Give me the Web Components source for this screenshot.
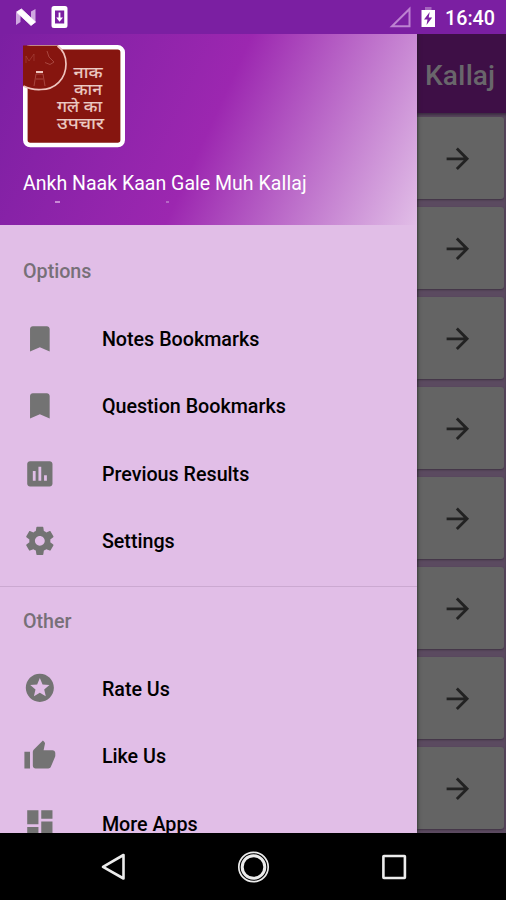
<!DOCTYPE html>
<html lang="en">
<head>
<meta charset="utf-8">
<title>Ankh Naak Kaan Gale Muh KaIlaj</title>
<style>
html,body{margin:0;height:900px;overflow:hidden;background:#000;font-family:Roboto,"Noto Sans",sans-serif}
</style>
</head>
<body>
<app-screen></app-screen>
<script>
function define(name, html, setup) {
  customElements.define(name, class extends HTMLElement {
    connectedCallback() {
      if (this.shadowRoot) return;
      const t = document.createElement('template');
      t.innerHTML = html;
      this.attachShadow({mode: 'open'}).appendChild(t.content.cloneNode(true));
      if (setup) setup(this, this.shadowRoot);
    }
  });
}

const ICONS = {
  bookmark: 'M17 3H7c-1.1 0-1.99.9-1.99 2L5 21l7-3 7 3V5c0-1.1-.9-2-2-2z',
  chart: 'M19 3H5c-1.1 0-2 .9-2 2v14c0 1.1.9 2 2 2h14c1.1 0 2-.9 2-2V5c0-1.1-.9-2-2-2zM9 17H7v-7h2v7zm4 0h-2V7h2v10zm4 0h-2v-4h2v4z',
  gear: 'M19.43 12.98c.04-.32.07-.64.07-.98s-.03-.66-.07-.98l2.11-1.65c.19-.15.24-.42.12-.64l-2-3.46c-.12-.22-.39-.3-.61-.22l-2.49 1c-.52-.4-1.08-.73-1.69-.98l-.38-2.65C14.46 2.18 14.25 2 14 2h-4c-.25 0-.46.18-.49.42l-.38 2.65c-.61.25-1.17.59-1.69.98l-2.49-1c-.23-.09-.49 0-.61.22l-2 3.46c-.13.22-.07.49.12.64l2.11 1.65c-.04.32-.07.65-.07.98s.03.66.07.98l-2.11 1.65c-.19.15-.24.42-.12.64l2 3.46c.12.22.39.3.61.22l2.49-1c.52.4 1.08.73 1.69.98l.38 2.65c.03.24.24.42.49.42h4c.25 0 .46-.18.49-.42l.38-2.65c.61-.25 1.17-.59 1.69-.98l2.49 1c.23.09.49 0 .61-.22l2-3.46c.12-.22.07-.49-.12-.64l-2.11-1.65zM12 15.5c-1.93 0-3.5-1.57-3.5-3.5s1.57-3.5 3.5-3.5 3.5 1.57 3.5 3.5-1.57 3.5-3.5 3.5z',
  star: 'M11.99 2C6.47 2 2 6.48 2 12s4.47 10 9.99 10C17.52 22 22 17.52 22 12S17.52 2 11.99 2zm4.24 16L12 15.45 7.77 18l1.12-4.81-3.73-3.23 4.92-.42L12 5l1.92 4.53 4.92.42-3.73 3.23L16.23 18z',
  thumb: 'M1 21h4V9H1v12zm22-11c0-1.1-.9-2-2-2h-6.31l.95-4.57.03-.32c0-.41-.17-.79-.44-1.06L14.17 1 7.59 7.59C7.22 7.95 7 8.45 7 9v10c0 1.1.9 2 2 2h9c.83 0 1.54-.5 1.84-1.22l3.02-7.05c.09-.23.14-.47.14-.73v-2z',
  dashboard: 'M3 13h8V3H3v10zm0 8h8v-6H3v6zm10 0h8V11h-8v10zm0-18v6h8V3h-8z',
  arrow: 'M12 4l-1.41 1.41L16.17 11H4v2h12.17l-5.58 5.59L12 20l8-8z'
};

define('md-icon', `<style>:host{display:block;width:33.7px;height:33.7px;flex:none}svg{display:block;width:100%;height:100%;fill:currentColor}</style>
<svg viewBox="0 0 24 24"><path/></svg>`, (el, root) => root.querySelector('path').setAttribute('d', ICONS[el.getAttribute('name')]));

define('status-bar', `<style>
:host{display:flex;height:34px;background:#7b1fa2;color:#fff;align-items:center;justify-content:space-between;box-sizing:border-box;padding:0 11px 0 15px}
div{display:flex;align-items:center}svg{display:block}
.time{font-size:19.7px;font-weight:500;line-height:34px;padding-top:3px;margin-left:8px}
</style>
<div><svg width="56" height="34" viewBox="15 0 56 34">
<path d="M16 13L20.500 9.500v12.500l-4.500 3zM31 11.500L35.500 9v13L31 25z" fill="#cfa8e0"/>
<path d="M16.500 12L21.500 9 35.500 22 31 25.500z" fill="#fff" stroke="#fff" stroke-width=".8" stroke-linejoin="round"/>
<path fill-rule="evenodd" fill="#fff" d="M54 6h11q2.500 0 2.500 2.500v17q0 2.500-2.500 2.500H54q-2.500 0-2.500-2.500v-17Q51.500 6 54 6zM55 10.500v13h9.200v-13z"/>
<path d="M59.500 12.500v6" fill="none" stroke="#fff" stroke-width="1.800"/><path d="M56.200 17.500h6.800l-3.400 4.300z" fill="#fff"/></svg></div>
<div><svg width="50" height="34" viewBox="388 0 50 34">
<path d="M393 26.200L410.500 9v17.200z" fill="none" stroke="#bd82d1" stroke-width="2"/>
<path d="M426 7h6.500v3H426z" fill="#a566be"/><path d="M422.500 10h13.500v17h-13.500z" fill="#fff"/><path d="M430.700 12l-5.700 7.500h3.500l-1 5.500 5.700-7.500h-3.500z" fill="#7b1fa2"/></svg>
<span class="time">16:40</span></div>`);

define('app-logo', `<style>:host{display:block;width:102px;height:103px}svg{display:block}text{font-family:"Noto Sans Devanagari","Noto Sans","Lohit Devanagari",sans-serif;font-size:16px;fill:#eccbc5;stroke:#eccbc5;stroke-width:.2px}</style>
<svg width="102" height="103" viewBox="23 45 102 103">
<rect x="25.300" y="47.300" width="97.400" height="97.700" rx="5" fill="#86150f" stroke="#fff" stroke-width="4.600"/>
<path d="M23 45.500H58A23 23 0 0 1 66.500 63C66.500 79 56 90 40 90Q30 89.500 23 86z" fill="#86150f"/>
<path d="M57.500 46C63 50 66 57 66 64C66 79 55 89.500 41 89.500Q31 90 23.500 86" fill="none" stroke="#efc4be" stroke-width="1.700"/>
<g fill="none" stroke="#a8463f" stroke-width="1"><path d="M26 63v-7l3 5 5-7v7" opacity=".6"/><path d="M47 51l2 6 5 5-4 2.500-5-2"/><path d="M34 86l2-12h7l2 12M36 79h7"/><path d="M36 72h7" stroke="#efc4be" stroke-width="2"/></g>
<text><tspan x="73.500" y="77.500" textLength="29" lengthAdjust="spacingAndGlyphs">नाक</tspan>
<tspan x="74" y="94.500" textLength="28" lengthAdjust="spacingAndGlyphs">कान</tspan>
<tspan x="57" y="111.500" textLength="45" lengthAdjust="spacingAndGlyphs">गले का</tspan>
<tspan x="57" y="128.500" textLength="47" lengthAdjust="spacingAndGlyphs">उपचार</tspan></text>
</svg>`);

define('drawer-header', `<style>
:host{display:flex;flex-direction:column;height:191px;box-sizing:border-box;padding:11px 23px 0;background:linear-gradient(114.6deg,#7b1fa2,#9c27b0 50%,#e1bee7);color:#fff;flex:none}
.name{font-size:19.550px;line-height:24px;margin-top:24px;white-space:nowrap}
.dots{display:flex;gap:106px;margin-left:32px;margin-top:5px}
i{display:block;width:5px;height:2px;background:#c98ad6}i+i{width:3px;background:#b668c6}
</style><app-logo></app-logo><div class="name"><slot></slot></div><div class="dots"><i></i><i></i></div>`);

define('menu-item', `<style>
:host{display:flex;height:67.450px;align-items:center;padding-left:23px;color:#000;font-size:19.700px;font-weight:500}
md-icon{color:#737373;margin-right:45.200px}span{white-space:nowrap;position:relative;top:1px}
</style><md-icon></md-icon><span><slot></slot></span>`, (el, root) => {
  const icon = root.querySelector('md-icon');
  const fresh = document.createElement('md-icon');
  fresh.setAttribute('name', el.getAttribute('icon'));
  icon.replaceWith(fresh);
});

define('menu-group', `<style>
:host{display:block}
.label{height:67.500px;line-height:70px;padding-left:23px;font-size:19.700px;font-weight:500;color:#777078}
</style><div class="label"></div><slot></slot>`, (el, root) => root.querySelector('.label').textContent = el.getAttribute('label'));

define('nav-drawer', `<style>
:host{display:flex;flex-direction:column;width:417px;height:799px;background:#e1bee7;overflow:hidden;flex:none}
.list{padding-top:12.300px}
.rule{height:1.500px;background:#cba9d1;margin:11px 0 0}
</style>
<drawer-header>Ankh Naak Kaan Gale Muh KaIlaj</drawer-header>
<div class="list">
<menu-group label="Options"><menu-item icon="bookmark">Notes Bookmarks</menu-item><menu-item icon="bookmark">Question Bookmarks</menu-item><menu-item icon="chart">Previous Results</menu-item><menu-item icon="gear">Settings</menu-item></menu-group>
<div class="rule"></div>
<menu-group label="Other"><menu-item icon="star">Rate Us</menu-item><menu-item icon="thumb">Like Us</menu-item><menu-item icon="dashboard">More Apps</menu-item></menu-group>
</div>`);

define('list-card', `<style>
:host{display:flex;height:82px;background:#646464;border-radius:0 3px 3px 0;align-items:center;padding:1.500px 0 0 24px;box-sizing:border-box;box-shadow:0 1px 2px #3d3142;color:#222;flex:none}
</style><md-icon name="arrow"></md-icon>`);

define('dimmed-page', `<style>
:host{display:block;width:89px;height:799px;background:#5b4a60;overflow:hidden}
header{height:79px;background:#3e0f46;color:#69666b;font-size:28px;font-weight:500;line-height:83px;padding-left:8px;box-sizing:border-box}
.cards{display:flex;flex-direction:column;gap:8px;padding:4px 2px 0 0;box-shadow:inset 0 3px 3px -1px #3a2a40}
</style><header>KaIlaj</header><div class="cards"></div>`, (el, root) => {
  const box = root.querySelector('.cards');
  for (let i = 0; i < 8; i++) box.appendChild(document.createElement('list-card'));
});

define('nav-bar', `<style>:host{display:flex;height:67px;background:#000;align-items:center;justify-content:center}svg{display:block}</style>
<svg width="506" height="67" viewBox="0 833 506 67" fill="none" stroke="#ececec">
<path d="M103 866.800L123.500 855v23.500z" stroke-width="2.600" stroke-linejoin="round"/>
<circle cx="253.500" cy="867" r="11.300" stroke-width="3"/><circle cx="253.500" cy="867" r="14.700" stroke-width="1.700"/>
<rect x="383.400" y="856" width="21.500" height="22" rx=".5" stroke-width="2.600"/></svg>`);

define('app-screen', `<style>:host{display:flex;flex-direction:column;width:506px;height:900px;overflow:hidden}main{display:flex;height:799px;overflow:hidden}nav-drawer{position:relative;box-shadow:0 0 4px #1c241c}</style>
<status-bar></status-bar><main><nav-drawer></nav-drawer><dimmed-page></dimmed-page></main><nav-bar></nav-bar>`);
</script>
</body>
</html>
